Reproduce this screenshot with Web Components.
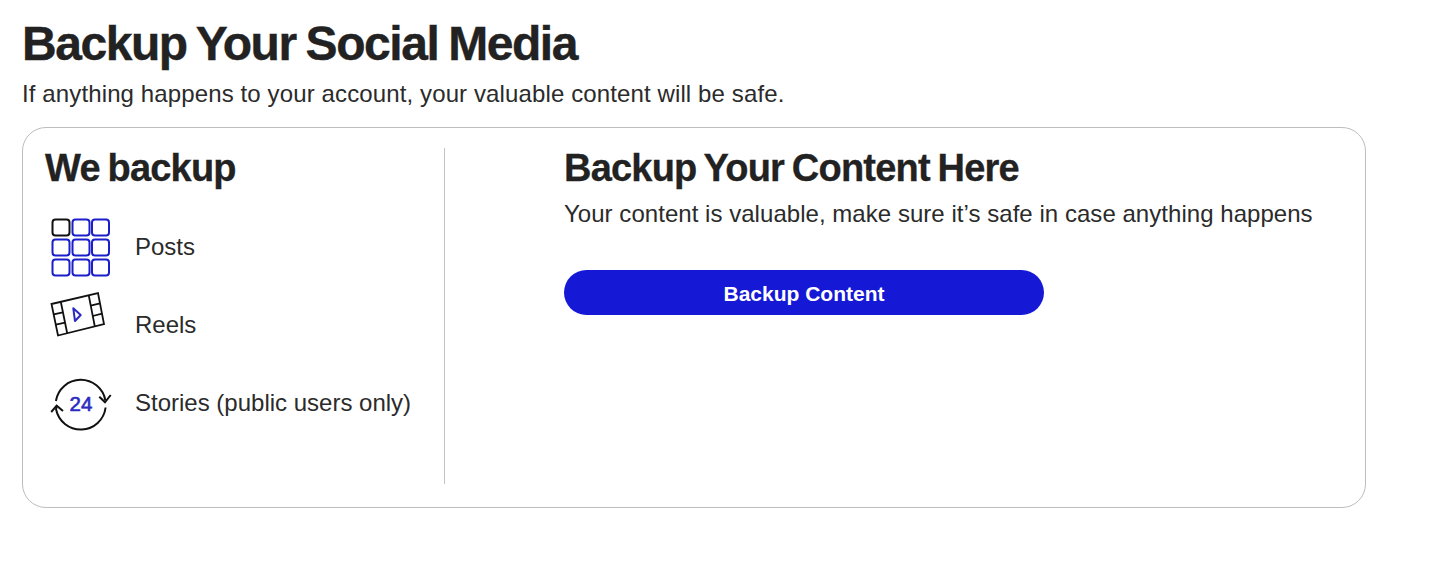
<!DOCTYPE html>
<html>
<head>
<meta charset="utf-8">
<style>
  html, body { margin: 0; background: #fff; }
  body { font-family: "Liberation Sans", Arial, sans-serif; color: #222; }
</style>
</head>
<body>
<backup-page>
  <span slot="title">Backup Your Social Media</span>
  <span slot="subtitle">If anything happens to your account, your valuable content will be safe.</span>
  <backup-card>
    <div slot="left">
      <backup-item icon="posts">Posts</backup-item>
      <backup-item icon="reels">Reels</backup-item>
      <backup-item icon="stories">Stories (public users only)</backup-item>
    </div>
    <backup-action slot="right"></backup-action>
  </backup-card>
</backup-page>

<script>
class BackupPage extends HTMLElement {
  constructor() {
    super();
    this.attachShadow({ mode: 'open' }).innerHTML = `
      <style>
        :host { display: block; padding: 16px 64px 0 22px; }
        h1 { margin: 0; font-size: 48px; line-height: 56px; font-weight: 700; letter-spacing: -1.45px; word-spacing: -2px; -webkit-text-stroke: 0.4px #222; color: #222; }
        p { margin: 8px 0 0; font-size: 24px; line-height: 27px; letter-spacing: 0.12px; color: #2b2b2b; }
        .body { margin-top: 20px; }
      </style>
      <h1><slot name="title"></slot></h1>
      <p><slot name="subtitle"></slot></p>
      <div class="body"><slot></slot></div>
    `;
  }
}

class BackupCard extends HTMLElement {
  constructor() {
    super();
    this.attachShadow({ mode: 'open' }).innerHTML = `
      <style>
        :host { display: block; box-sizing: border-box; height: 381px; border: 1px solid #bdbdbd; border-radius: 24px; padding: 20px 22px 23px 22px; }
        .cols { display: flex; height: 100%; }
        .left { box-sizing: border-box; width: 400px; border-right: 1px solid #c4c4c4; }
        .right { padding-left: 119px; flex: 1; }
        h2 { margin: 0; font-size: 38px; line-height: 40px; font-weight: 700; letter-spacing: -0.8px; word-spacing: -2px; -webkit-text-stroke: 0.3px #222; color: #222; }
        .items { margin-top: 20px; }
      </style>
      <div class="cols">
        <div class="left">
          <h2>We backup</h2>
          <div class="items"><slot name="left"></slot></div>
        </div>
        <div class="right"><slot name="right"></slot></div>
      </div>
    `;
  }
}

const ICONS = {
  posts: `<svg width="60" height="60" viewBox="0 0 60 60" fill="none" stroke="#1a1fc9" stroke-width="2">
      <rect x="1.5" y="1.5" width="17" height="16" rx="3" stroke="#111"/>
      <rect x="21.5" y="1.5" width="17" height="16" rx="3"/>
      <rect x="41" y="1.5" width="17" height="16" rx="3"/>
      <rect x="1.5" y="21.5" width="17" height="16" rx="3"/>
      <rect x="21.5" y="21.5" width="17" height="16" rx="3"/>
      <rect x="41" y="21.5" width="17" height="16" rx="3"/>
      <rect x="1.5" y="41.5" width="17" height="16" rx="3"/>
      <rect x="21.5" y="41.5" width="17" height="16" rx="3"/>
      <rect x="41" y="41.5" width="17" height="16" rx="3"/>
    </svg>`,
  reels: `<svg width="60" height="60" viewBox="0 0 60 60" fill="none" stroke="#111" stroke-width="1.8" style="overflow:visible">
      <path d="M0.5 8 L47 -3 L53 28 L7 39.5 Z"/>
      <path d="M9.8 5.8 L16.2 37.2 M37.7 -0.8 L43.8 30.3"/>
      <path d="M2.7 18.3 L11.9 16.3 M4.8 28.7 L14.1 26.7 M49 7.3 L39.7 9.6 M51 17.7 L41.8 20"/>
      <path d="M22.3 12.3 L29.7 19 L24 25 Z" stroke="#2a2ac0" stroke-width="2" stroke-linejoin="round"/>
    </svg>`,
  stories: `<svg width="60" height="60" viewBox="0 0 60 60" fill="none" stroke="#111" stroke-width="2" style="overflow:visible">
      <path d="M4.9 27 A25.1 25.1 0 0 1 54.4 26.5"/>
      <path d="M48.3 22.7 L54 28.3 L59.7 21"/>
      <path d="M54.6 33.5 A25.1 25.1 0 0 1 5.1 35.5 L5.7 31.7"/>
      <path d="M0.2 38 L5.7 31.7 L12 37"/>
      <text x="30" y="37" text-anchor="middle" font-family="Liberation Sans, Arial, sans-serif" font-size="20.5" fill="#2a2ac0" stroke="#2a2ac0" stroke-width="0.6">24</text>
    </svg>`
};

class BackupItem extends HTMLElement {
  constructor() {
    super();
    this.attachShadow({ mode: 'open' }).innerHTML = `
      <style>
        :host { display: flex; align-items: center; height: 78px; font-size: 24px; color: #2b2b2b; }
        .icon { width: 90px; height: 60px; margin-top: 2px; padding-left: 6px; box-sizing: border-box; flex: none; }
        svg { display: block; }
      </style>
      <div class="icon"></div>
      <slot></slot>
    `;
  }
  connectedCallback() {
    this.shadowRoot.querySelector('.icon').innerHTML = ICONS[this.getAttribute('icon')] || '';
  }
}

class BackupAction extends HTMLElement {
  constructor() {
    super();
    this.attachShadow({ mode: 'open' }).innerHTML = `
      <style>
        :host { display: block; }
        h2 { margin: 0; font-size: 38px; line-height: 40px; font-weight: 700; letter-spacing: -0.8px; word-spacing: -2px; -webkit-text-stroke: 0.3px #222; color: #222; }
        p { margin: 12px 0 0; font-size: 24px; line-height: 27px; letter-spacing: 0.04px; color: #2b2b2b; }
        button { display: block; margin-top: 43px; width: 480px; height: 45px; padding: 2px 0 0; border: 0; border-radius: 23px; background: #1519d6; color: #fff; font: 700 21px "Liberation Sans", Arial, sans-serif; }
      </style>
      <h2>Backup Your Content Here</h2>
      <p>Your content is valuable, make sure it’s safe in case anything happens</p>
      <button>Backup Content</button>
    `;
  }
}

customElements.define('backup-page', BackupPage);
customElements.define('backup-card', BackupCard);
customElements.define('backup-item', BackupItem);
customElements.define('backup-action', BackupAction);
</script>
</body>
</html>
